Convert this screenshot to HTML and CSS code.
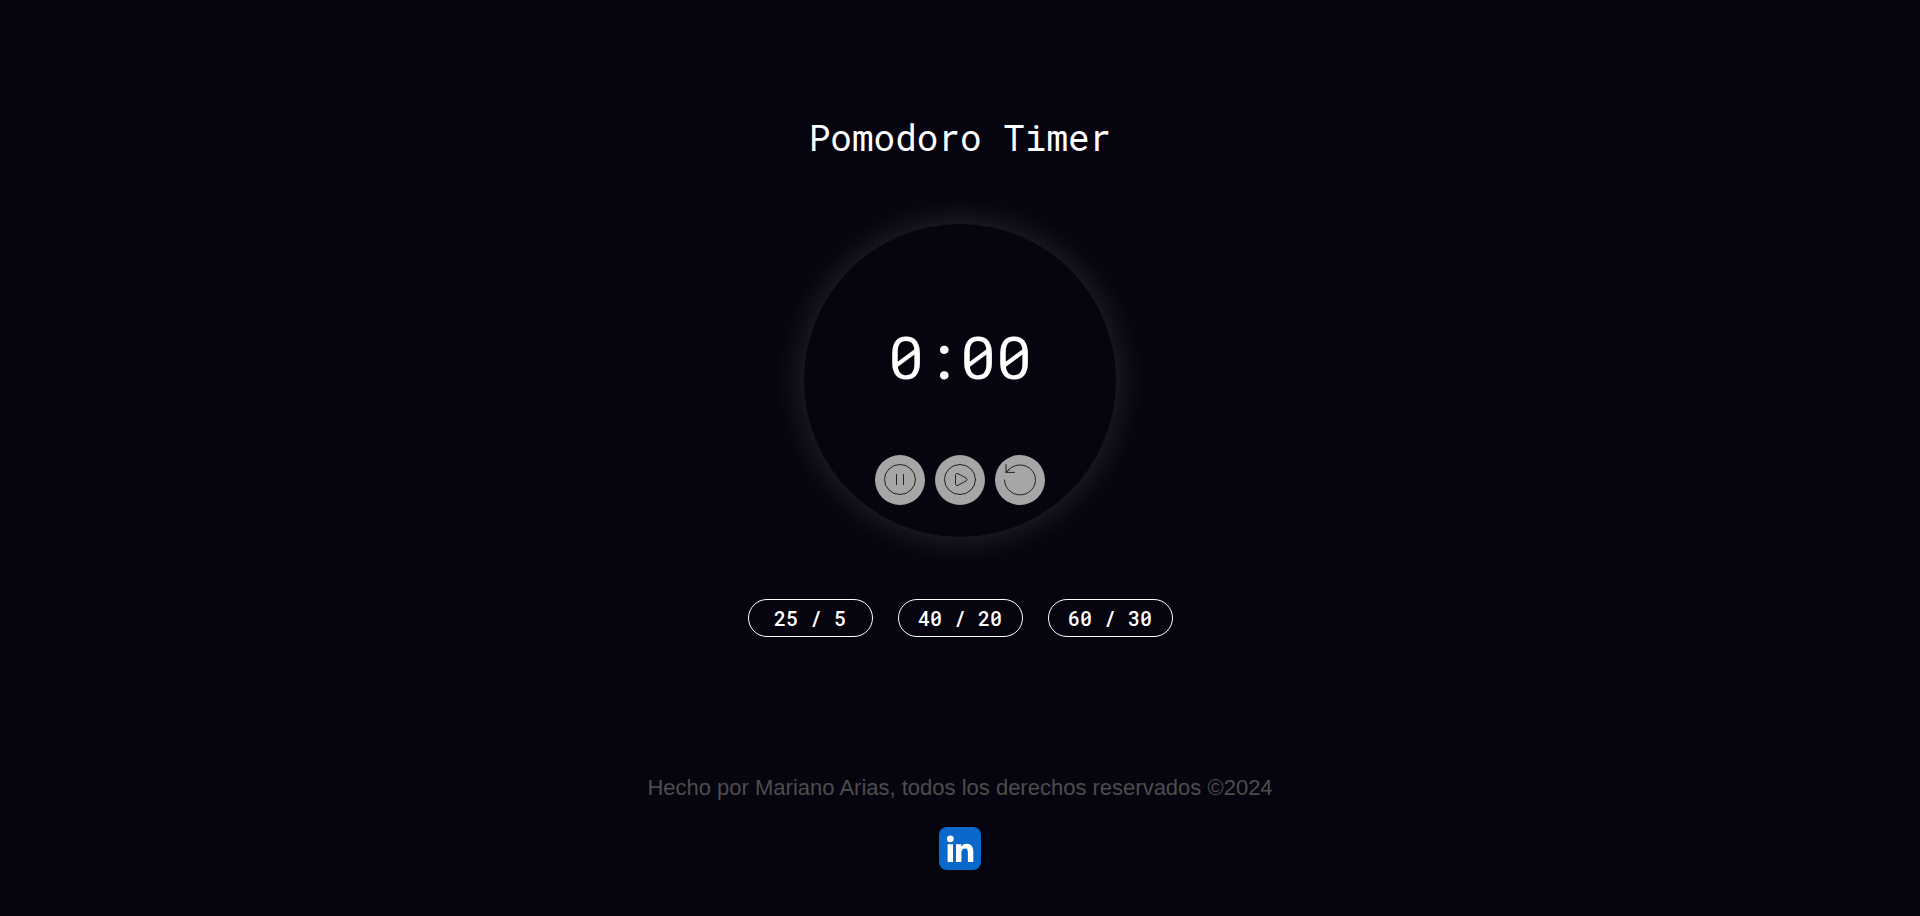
FILE: index.html
```html
<!DOCTYPE html>
<html lang="es">
<head>
<meta charset="utf-8">
<meta name="viewport" content="width=device-width, initial-scale=1">
<title>Pomodoro Timer</title>
<link rel="stylesheet" href="styles.css">
</head>
<body>
<main class="app">
  <h1 class="title">Pomodoro Timer</h1>
  <section class="dial" aria-label="Temporizador">
    <time class="clock">0:00</time>
    <div class="controls">
      <button class="control" type="button" aria-label="Pausa">
        <svg class="icon" viewBox="0 0 34 34"><ellipse cx="17" cy="16.5" rx="15.5" ry="15"/><path d="M13.5 11.500v10M20.500 11.500v10"/></svg>
      </button>
      <button class="control" type="button" aria-label="Iniciar">
        <svg class="icon" viewBox="0 0 34 34"><ellipse cx="17" cy="16.5" rx="15.5" ry="15"/><path d="M12.5 12.500q0-3 2.600-1.700l8 4.200q1.800 1.500 0 3l-8 4.200q-2.600 1.300-2.600-1.700z"/></svg>
      </button>
      <button class="control" type="button" aria-label="Reiniciar">
        <svg class="icon" viewBox="0 0 34 34"><path d="M1.5 17A15.5 15 0 1 0 4 8.700M3 1.500v7.900h8.500M3 9.400l3-3.200"/></svg>
      </button>
    </div>
  </section>
  <div class="presets">
    <button class="preset" type="button">25 / 5</button>
    <button class="preset" type="button">40 / 20</button>
    <button class="preset" type="button">60 / 30</button>
  </div>
</main>
<footer class="footer">
  <p class="credit">Hecho por Mariano Arias, todos los derechos reservados ©2024</p>
  <a class="social" href="#" aria-label="LinkedIn">
    <svg class="logo" viewBox="0 0 42 43"><rect width="42" height="43" rx="8" fill="#0869cb"/><circle cx="11.3" cy="11.8" r="3.4" fill="#fff"/><path fill="#fff" d="M8.6 17.3H14V35H8.6zM17 17.3h5.2v2.4c1.2-1.9 3-2.9 5.400-2.900 4.600 0 6.700 2.900 6.700 7.800V35h-5.400v-9.200c0-2.800-.8-4.300-2.900-4.300-2.400 0-3.600 1.700-3.600 4.500v9H17z"/></svg>
  </a>
</footer>
</body>
</html>
```
FILE: styles.css
```css
* {
  box-sizing: border-box;
}

body {
  margin: 0;
  min-height: 100vh;
  display: flex;
  flex-direction: column;
  align-items: center;
  background: #05040f;
  color: #fff;
  font-family: "Roboto Mono", "DejaVu Sans Mono", monospace;
}

.app {
  display: flex;
  flex-direction: column;
  align-items: center;
  padding-top: 113px;
}

.title {
  margin: 0;
  font-size: 36px;
  font-weight: 400;
  line-height: 48px;
}

.dial {
  width: 312px;
  height: 313px;
  margin-top: 63px;
  padding-bottom: 32px;
  display: flex;
  flex-direction: column;
  align-items: center;
  justify-content: flex-end;
  gap: 59px;
  border-radius: 50%;
  box-shadow: 0 0 36px rgba(255, 255, 255, 0.15);
}

.clock {
  font-size: 60px;
  font-weight: 400;
  line-height: 80px;
}

.controls {
  display: flex;
  gap: 10px;
}

.control {
  width: 50px;
  height: 50px;
  padding: 0;
  display: grid;
  place-items: center;
  border: 0;
  border-radius: 50%;
  background: #a6a6a6;
  cursor: pointer;
}

.icon {
  width: 34px;
  height: 34px;
  fill: none;
  stroke: #222;
  stroke-width: 1;
  stroke-linecap: round;
  stroke-linejoin: round;
}

.presets {
  display: flex;
  gap: 25px;
  margin-top: 62px;
}

.preset {
  width: 125px;
  height: 38px;
  padding: 0;
  border: 1px solid #fff;
  border-radius: 20px;
  background: transparent;
  color: inherit;
  font: 500 20px/26px "Roboto Mono", "DejaVu Sans Mono", monospace;
  cursor: pointer;
}

.footer {
  display: flex;
  flex-direction: column;
  align-items: center;
  gap: 27px;
  margin-top: 138px;
}

.credit {
  margin: 0;
  color: #4d4d4d;
  font: 22px/25px "Liberation Sans", Arial, sans-serif;
}

.social,
.logo {
  display: block;
  width: 42px;
  height: 43px;
}
```
